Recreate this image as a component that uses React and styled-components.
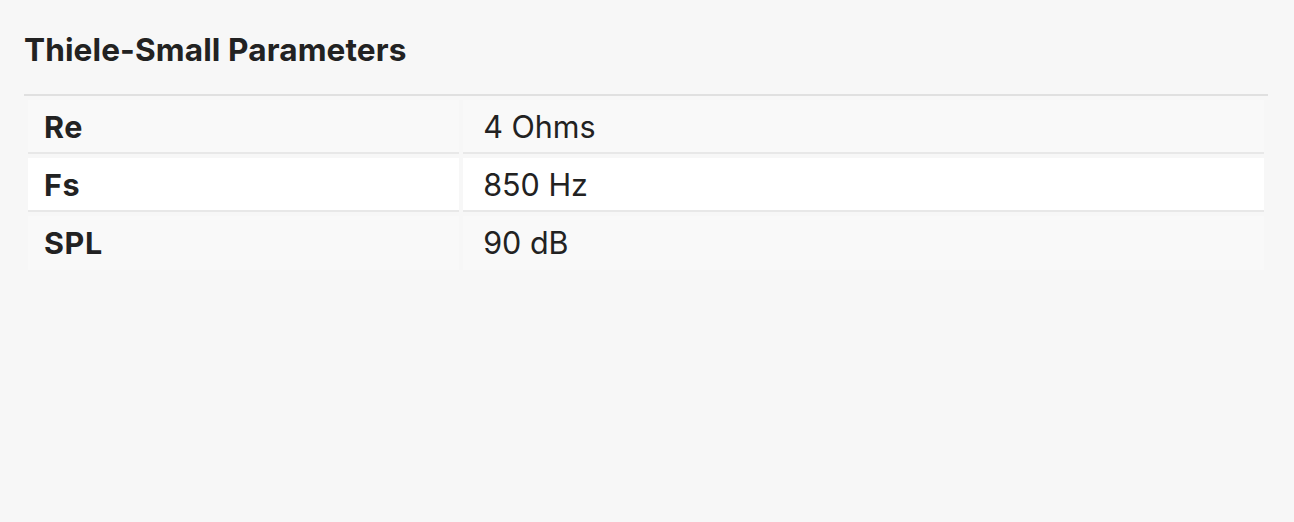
import React from 'react';
import styled, { createGlobalStyle } from 'styled-components';

const GlobalStyle = createGlobalStyle`
  html, body {
    margin: 0;
    background: #f7f7f7;
  }
  body {
    font-family: Inter, "Noto Sans", sans-serif;
    color: #222;
  }
`;

const params = [
  { name: 'Re', value: '4 Ohms' },
  { name: 'Fs', value: '850 Hz' },
  { name: 'SPL', value: '90 dB' },
];

const Page = styled.div`
  padding: 24px 26px 24px 24px;
  min-height: 522px;
  box-sizing: border-box;
`;

const Title = styled.h2`
  margin: 0;
  padding: 8px 0 26px;
  font-size: 31.6px;
  line-height: 36px;
  font-weight: 700;
  letter-spacing: 0.1px;
`;

const Table = styled.table`
  width: 100%;
  border-collapse: separate;
  border-spacing: 4px;
  border-top: 2px solid #e0e0e0;
  font-size: 30.5px;
`;

const Row = styled.tr`
  background: ${(p) => (p.$even ? '#ffffff' : '#f9f9f9')};
`;

const Name = styled.th`
  width: 35%;
  height: 52px;
  padding: 0 16px;
  text-align: left;
  font-weight: 700;
  letter-spacing: 0.6px;
  border-bottom: 2px solid ${(p) => (p.$last ? 'transparent' : '#e8e8e8')};
`;

const Value = styled.td`
  height: 52px;
  padding: 0 20px;
  font-weight: 400;
  border-bottom: 2px solid ${(p) => (p.$last ? 'transparent' : '#e8e8e8')};
`;

export default function App() {
  return (
    <Page>
      <GlobalStyle />
      <Title>Thiele-Small Parameters</Title>
      <Table>
        <tbody>
          {params.map((p, i) => {
            const last = i === params.length - 1;
            return (
              <Row key={p.name} $even={i % 2 === 1}>
                <Name $last={last}>{p.name}</Name>
                <Value $last={last}>{p.value}</Value>
              </Row>
            );
          })}
        </tbody>
      </Table>
    </Page>
  );
}
